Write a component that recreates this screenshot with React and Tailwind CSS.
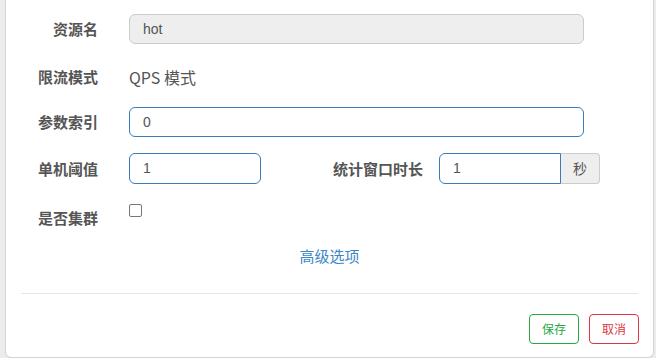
import React from "react";

const cjk = { fontFamily: '"Noto Sans CJK SC", "Liberation Sans", sans-serif' };
const lat = { fontFamily: '"Liberation Sans", "Noto Sans CJK SC", sans-serif' };

function Label({ children, w = "w-[92px]" }) {
  return (
    <div className={`${w} shrink-0 text-right text-[15px] font-bold text-[#555] leading-[20px]`} style={cjk}>
      {children}
    </div>
  );
}

export default function App() {
  return (
    <div className="w-[656px] h-[358px] bg-[#ececec] flex overflow-hidden">
      <div className="ml-[5px] w-[649px] h-[358px] bg-white border border-t-0 border-[#d4d4d4] rounded-b-[6px] flex flex-col">
        {/* Row 1 */}
        <div className="mt-[14px] h-[30px] flex items-center">
          <Label>资源名</Label>
          <div
            className="ml-[31px] w-[455px] h-[30px] rounded-[6px] border border-[#cccccc] bg-[#eeeeee] flex items-center pl-[13px] text-[14px] text-[#555]"
            style={lat}
          >
            hot
          </div>
        </div>
        {/* Row 2 */}
        <div className="mt-[18px] h-[30px] flex items-center">
          <Label>限流模式</Label>
          <div className="ml-[31px] text-[16px] text-[#555] leading-[20px]" style={cjk}>
            QPS 模式
          </div>
        </div>
        {/* Row 3 */}
        <div className="mt-[15px] h-[30px] flex items-center">
          <Label>参数索引</Label>
          <div
            className="ml-[31px] w-[455px] h-[30px] rounded-[6px] border border-[#3a7bbd] bg-white flex items-center pl-[13px] text-[14px] text-[#555]"
            style={lat}
          >
            0
          </div>
        </div>
        {/* Row 4 */}
        <div className="mt-[16px] h-[31px] flex items-center">
          <Label>单机阈值</Label>
          <div
            className="ml-[31px] w-[132px] h-[31px] rounded-[6px] border border-[#3a7bbd] bg-white flex items-center pl-[13px] text-[14px] text-[#555]"
            style={lat}
          >
            1
          </div>
          <Label w="w-[162px]">统计窗口时长</Label>
          <div className="ml-[16px] flex h-[31px]">
            <div
              className="w-[122px] h-[31px] rounded-l-[6px] border border-[#3a7bbd] bg-white flex items-center pl-[13px] text-[14px] text-[#555]"
              style={lat}
            >
              1
            </div>
            <div
              className="w-[39px] h-[31px] rounded-r-[4px] border border-l-0 border-[#cccccc] bg-[#eeeeee] flex items-center justify-center text-[14px] text-[#555]"
              style={cjk}
            >
              秒
            </div>
          </div>
        </div>
        {/* Row 5 */}
        <div className="mt-[20px] flex items-start">
          <div className="pt-[4px]">
            <Label>是否集群</Label>
          </div>
          <div className="ml-[31px] w-[13px] h-[13px] border border-[#767676] rounded-[2px] bg-white" />
        </div>
        {/* Advanced */}
        <div className="mt-[18px] flex justify-center">
          <span className="text-[15px] leading-[20px] text-[#3c86c8]" style={cjk}>
            高级选项
          </span>
        </div>
        {/* hr */}
        <div className="mt-[27px] mx-[15px] h-px bg-[#e5e5e5]" />
        {/* footer */}
        <div className="mt-[20px] mr-[14px] flex justify-end gap-[10px]">
          <div
            className="w-[50px] h-[30px] rounded-[4px] border border-[#28a745] text-[#28a745] text-[12px] flex items-center justify-center"
            style={cjk}
          >
            保存
          </div>
          <div
            className="w-[50px] h-[30px] rounded-[4px] border border-[#dc3545] text-[#dc3545] text-[12px] flex items-center justify-center"
            style={cjk}
          >
            取消
          </div>
        </div>
      </div>
    </div>
  );
}
